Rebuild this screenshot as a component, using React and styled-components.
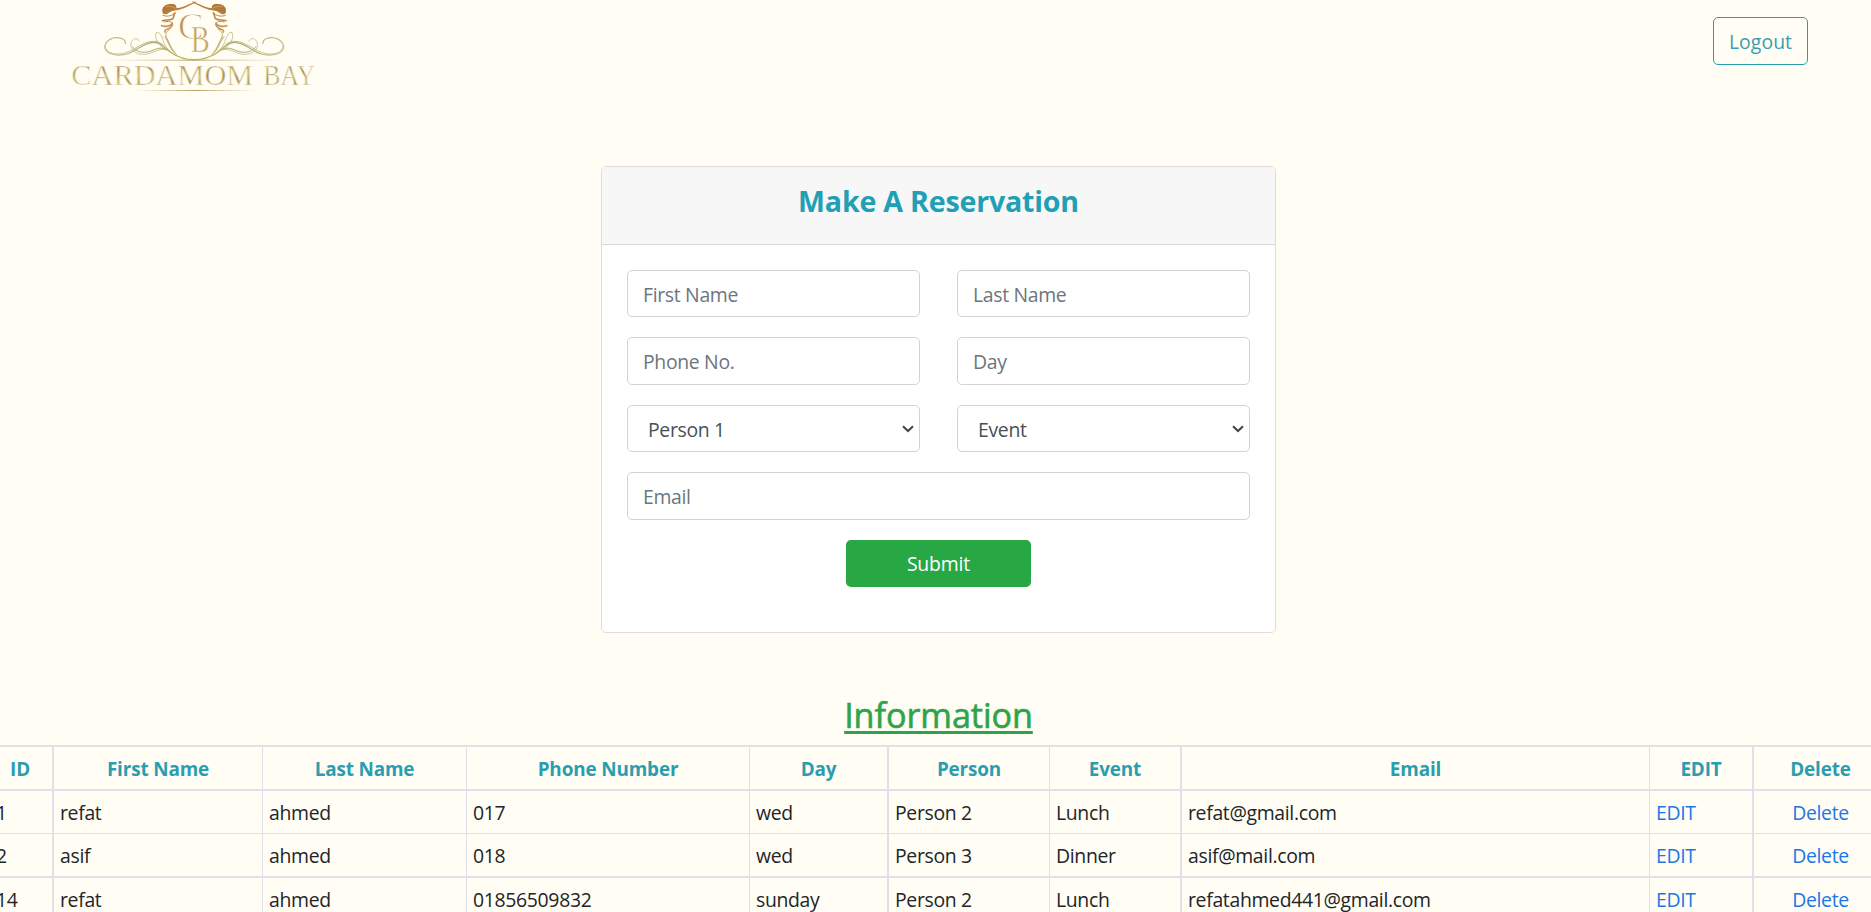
import React from "react";
import styled, { createGlobalStyle, css } from "styled-components";

const GlobalStyle = createGlobalStyle`
  *, *::before, *::after { box-sizing: border-box; }
  html, body { margin: 0; padding: 0; height: 100%; }
  body {
    background: #fffdf4;
    color: #212529;
    font-family: "Segoe UI", "Open Sans", "Noto Sans", sans-serif;
    font-size: 19.4px;
    line-height: 30px;
    letter-spacing: -0.32px;
    overflow: hidden;
  }
`;

const Page = styled.div`
  height: 912px;
  overflow: hidden;
`;

const Header = styled.header`
  display: flex;
  justify-content: space-between;
  align-items: flex-start;
  height: 166px;
  padding: 0 63px 0 50px;
`;

const LogoImage = styled.svg`
  display: block;
  width: 290px;
  height: 110px;
`;

const LogoutButton = styled.button`
  width: 95px;
  height: 48px;
  margin-top: 17px;
  padding: 1px 0 0;
  border: 1px solid #2a9db0;
  border-radius: 5px;
  background: transparent;
  color: #3a9db1;
  font: inherit;
  letter-spacing: 0.05px;
`;

const Card = styled.section`
  width: 675px;
  height: 467px;
  margin: 0 auto 0 601px;
  border: 1px solid #dddddb;
  border-radius: 5px;
  background: #fff;
  overflow: hidden;
`;

const CardHeader = styled.div`
  height: 78px;
  padding-top: 14px;
  border-bottom: 1px solid #d7d8d9;
  background: #f7f7f7;
`;

const CardTitle = styled.h2`
  margin: 0;
  color: #1fa0b5;
  font-size: 28.6px;
  line-height: 40px;
  font-weight: 700;
  letter-spacing: -0.2px;
  text-align: center;
`;

const Form = styled.form`
  display: grid;
  grid-template-columns: 293px 293px;
  grid-template-rows: 47px 48px 47px 48px 47px;
  column-gap: 37px;
  row-gap: 20px;
  padding: 25px;
`;

const control = css`
  width: 100%;
  height: 100%;
  border: 1px solid #ced4da;
  border-radius: 5px;
  background: #fff;
  font: inherit;
  letter-spacing: inherit;
  outline: none;
`;

const Input = styled.input`
  ${control}
  grid-column: ${(p) => (p.$wide ? "1 / -1" : "auto")};
  padding: 1px 15px 0;
  &::placeholder { color: #6c757d; opacity: 1; }
`;

const SelectBox = styled.div`
  position: relative;
`;

const Select = styled.select`
  ${control}
  appearance: none;
  padding: 3px 30px 0 20px;
  color: #495057;
`;

const Chevron = styled.svg`
  position: absolute;
  top: 20px;
  right: 6px;
  width: 12px;
  height: 8px;
  pointer-events: none;
`;

const SubmitButton = styled.button`
  grid-column: 1 / -1;
  justify-self: center;
  width: 185px;
  border: 0;
  border-radius: 5px;
  padding: 1px 0 0;
  background: #28a745;
  color: #fff;
  font: inherit;
  letter-spacing: -0.15px;
`;

const SectionTitle = styled.h1`
  height: 50px;
  margin: 62px 0 0;
  padding-left: 6px;
  color: #2ea44a;
  font-size: 34.2px;
  line-height: 40px;
  font-weight: 500;
  letter-spacing: -0.08px;
  text-align: center;
  text-decoration: underline;
  text-decoration-thickness: 3px;
  text-underline-offset: 3px;
  text-decoration-skip-ink: none;
  -webkit-text-stroke: 0.6px #2ea44a;
`;

const Table = styled.div`
  width: 1897px;
  margin-left: -12px;
  border-top: 2px solid #dee2e6;
`;

const Row = styled.div`
  display: grid;
  grid-template-columns: 66px 209px 204px 283px 139px 161px 132px 468px 104px 133px;
  height: ${(p) => 42 + p.$rule}px;
  border-bottom: ${(p) => p.$rule}px solid #dee2e6;
`;

const Cell = styled.div`
  border-right: ${(p) => p.$rule}px solid #dee2e6;
  padding: 7px 6px 0 ${(p) => (p.$first ? 8 : 6)}px;
  text-align: ${(p) => (p.$center ? "center" : "left")};
  white-space: nowrap;
`;

const HeadCell = styled(Cell)`
  padding: 7px 0 0;
  color: #2a9db0;
  font-size: 18.9px;
  font-weight: 700;
  letter-spacing: -0.15px;
  text-align: center;
`;

const ActionLink = styled.a`
  color: #1c77e6;
  text-decoration: none;
`;

const columns = ["ID", "First Name", "Last Name", "Phone Number", "Day", "Person", "Event", "Email", "EDIT", "Delete"];
const columnRules = [2, 1, 1, 1, 2, 1, 2, 1, 2, 0];

const reservations = [
  { rule: 1, values: ["1", "refat", "ahmed", "017", "wed", "Person 2", "Lunch", "refat@gmail.com"] },
  { rule: 2, values: ["2", "asif", "ahmed", "018", "wed", "Person 3", "Dinner", "asif@mail.com"] },
  { rule: 1, values: ["14", "refat", "ahmed", "01856509832", "sunday", "Person 2", "Lunch", "refatahmed441@gmail.com"] },
];

function Flourish() {
  return (
    <>
      <g fill="none" stroke="url(#leaf)" strokeLinecap="round">
        <path strokeWidth="3.4" d="M226 131C228 117 207 110 190 114C170 119 159 137 167 150C177 166 208 168 231 162C264 152 279 128 311 127C334 126 346 146 365 159C383 171 407 179 432 179" />
        <path strokeWidth="2.4" d="M183 117C165 124 162 141 171 151C184 164 212 164 231 157C261 145 278 126 308 124C322 123 331 128 339 135" />
        <path strokeWidth="2" d="M268 124C265 113 251 113 245 124C239 137 244 150 258 158C276 167 295 163 315 154C332 147 346 146 361 154" />
        <path strokeWidth="3" d="M247 140C263 163 293 159 313 149C327 143 338 143 349 148" />
        <path strokeWidth="2" d="M350 150C327 139 311 117 319 98C328 92 338 113 341 127C347 143 360 156 376 166" />
        <path strokeWidth="3" d="M343 110C355 121 356 142 374 159M348 111C361 129 360 144 379 163" />
      </g>
      <g fill="url(#crest)">
        <path d="M338 38C333 25 344 12 361 12C374 10 382 17 379 25L393 27C376 33 365 31 356 39C349 44 342 44 338 38Z" />
      </g>
      <g fill="none" stroke="url(#crest)" strokeLinecap="round">
        <path strokeWidth="4" d="M376 26C394 30 410 18 436 6" />
        <path strokeWidth="5" d="M375 39C368 45 375 52 367 57C359 62 349 58 337 62" />
        <path strokeWidth="3" d="M339 46C350 51 362 48 372 42M343 66C354 62 368 65 367 71" />
        <path strokeWidth="5" d="M335 77C347 82 361 78 367 71C370 80 358 84 351 88C345 91 343 93 345 96" />
        <path strokeWidth="3" d="M361 87C352 92 344 101 349 110" />
      </g>
      <g fill="none" stroke="#e9c88f" strokeWidth="1.5">
        <path d="M347 21C357 17 368 19 376 25" />
      </g>
    </>
  );
}

function Logo() {
  return (
    <LogoImage viewBox="0 0 870 330" role="img" aria-label="Cardamom Bay">
      <defs>
        <linearGradient id="crest" x1="335" y1="10" x2="380" y2="110" gradientUnits="userSpaceOnUse">
          <stop offset="0" stopColor="#a96d2c" />
          <stop offset="0.45" stopColor="#bd8544" />
          <stop offset="1" stopColor="#cdb377" />
        </linearGradient>
        <linearGradient id="leaf" x1="165" y1="0" x2="432" y2="0" gradientUnits="userSpaceOnUse">
          <stop offset="0" stopColor="#c6bf8c" />
          <stop offset="0.5" stopColor="#afa96c" />
          <stop offset="1" stopColor="#bcb562" />
        </linearGradient>
        <linearGradient id="gold" x1="0" y1="0" x2="35" y2="20" gradientUnits="userSpaceOnUse" spreadMethod="reflect">
          <stop offset="0" stopColor="#a8935c" />
          <stop offset="0.5" stopColor="#d3c478" />
          <stop offset="1" stopColor="#a68f58" />
        </linearGradient>
        <linearGradient id="rule" x1="0" y1="0" x2="1" y2="0">
          <stop offset="0" stopColor="#c9b97b" stopOpacity="0" />
          <stop offset="0.5" stopColor="#b79f5f" />
          <stop offset="1" stopColor="#c9b97b" stopOpacity="0" />
        </linearGradient>
      </defs>
      <Flourish />
      <g transform="translate(865 0) scale(-1 1)">
        <Flourish />
      </g>
      <g fill="url(#gold)" stroke="#fffdf4" strokeWidth="1.6" fontFamily="'Liberation Serif', serif" letterSpacing="0">
        <text x="383" y="117" fontSize="112" textLength="78" lengthAdjust="spacingAndGlyphs" fill="#b8955a" strokeWidth="3">C</text>
        <text x="422" y="156" fontSize="115" textLength="57" lengthAdjust="spacingAndGlyphs" fill="#c0a25a" strokeWidth="2">B</text>
        <text x="64" y="254" fontSize="88" textLength="546" lengthAdjust="spacingAndGlyphs">CARDAMOM</text>
        <text x="640" y="254" fontSize="88" textLength="156" lengthAdjust="spacingAndGlyphs">BAY</text>
      </g>
      <rect x="160" y="179" width="545" height="3" fill="url(#rule)" />
      <rect x="250" y="270" width="370" height="3" fill="url(#rule)" />
    </LogoImage>
  );
}

function SelectField({ label }) {
  return (
    <SelectBox>
      <Select defaultValue={label}>
        <option>{label}</option>
      </Select>
      <Chevron viewBox="0 0 12 8">
        <path d="M1 1.2L6 6L11 1.2" fill="none" stroke="#3f454b" strokeWidth="2" />
      </Chevron>
    </SelectBox>
  );
}

export default function App() {
  return (
    <Page>
      <GlobalStyle />
      <Header>
        <Logo />
        <LogoutButton>Logout</LogoutButton>
      </Header>
      <Card>
        <CardHeader>
          <CardTitle>Make A Reservation</CardTitle>
        </CardHeader>
        <Form onSubmit={(e) => e.preventDefault()}>
          <Input placeholder="First Name" />
          <Input placeholder="Last Name" />
          <Input placeholder="Phone No." />
          <Input placeholder="Day" />
          <SelectField label="Person 1" />
          <SelectField label="Event" />
          <Input placeholder="Email" $wide />
          <SubmitButton>Submit</SubmitButton>
        </Form>
      </Card>
      <SectionTitle>Information</SectionTitle>
      <Table>
        <Row $rule={2}>
          {columns.map((name, i) => (
            <HeadCell key={name} $rule={columnRules[i]}>{name}</HeadCell>
          ))}
        </Row>
        {reservations.map(({ rule, values }) => (
          <Row key={values[0]} $rule={rule}>
            {values.map((value, i) => (
              <Cell key={i} $first={i === 0} $rule={columnRules[i]}>{value}</Cell>
            ))}
            <Cell $rule={columnRules[8]}><ActionLink>EDIT</ActionLink></Cell>
            <Cell $rule={columnRules[9]} $center><ActionLink>Delete</ActionLink></Cell>
          </Row>
        ))}
      </Table>
    </Page>
  );
}
